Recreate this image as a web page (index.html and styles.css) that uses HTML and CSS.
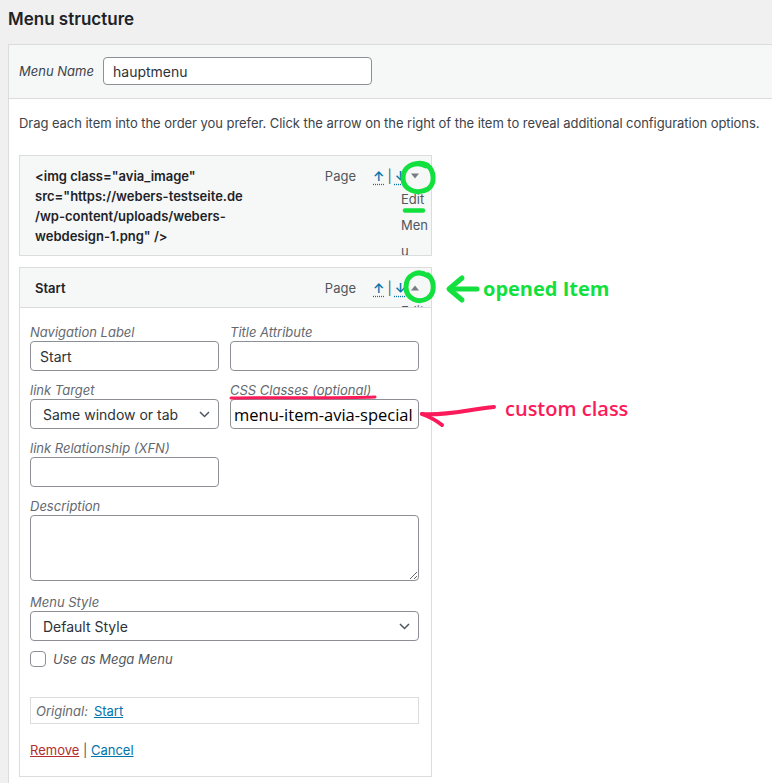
FILE: index.html
```html
<!DOCTYPE html>
<html lang="en">
<head>
<meta charset="utf-8">
<title>Menu structure</title>
<link rel="stylesheet" href="styles.css">
</head>
<body>
<div class="page">
  <h2 class="title">Menu structure</h2>
  <div class="menu-panel">
    <div class="menu-name-bar">
      <label class="lbl-name" for="menu-name">Menu Name</label>
      <input id="menu-name" class="name-input" type="text" value="hauptmenu">
    </div>
    <div class="menu-body">
      <p class="intro">Drag each item into the order you prefer. Click the arrow on the right of the item to reveal additional configuration options.</p>
      <ul class="items">
        <li class="item">
          <div class="handle">
            <div class="item-title">&lt;img class="avia_image"<br>src="https://webers-testseite.de<br>/wp-content/uploads/webers-<br>webdesign-1.png" /&gt;</div>
            <div class="controls">
              <span class="type">Page</span>
              <span class="moves"><a class="mv" href="#">↑</a><span class="bar">|</span><a class="mv" href="#">↓</a></span>
              <div class="toggle">
                <span class="tri"><svg width="8" height="6" viewBox="0 0 8 6"><path d="M0 0.5 L8 0.5 L4 5.5 Z" fill="#787c82"/></svg></span>
                <span class="edit-txt">Edit<br>Men<br>u</span>
              </div>
            </div>
          </div>
        </li>
        <li class="item">
          <div class="handle">
            <div class="item-title">Start</div>
            <div class="controls">
              <span class="type">Page</span>
              <span class="moves"><a class="mv" href="#">↑</a><span class="bar">|</span><a class="mv" href="#">↓</a></span>
              <div class="toggle">
                <span class="tri"><svg width="8" height="6" viewBox="0 0 8 6"><path d="M0 5.5 L8 5.5 L4 0.5 Z" fill="#787c82"/></svg></span>
                <span class="edit-txt">Edit<br>Men<br>u</span>
              </div>
            </div>
          </div>
          <div class="settings">
            <div class="grid">
              <div class="field">
                <label>Navigation Label</label>
                <input class="ctl" type="text" value="Start">
              </div>
              <div class="field">
                <label>Title Attribute</label>
                <input class="ctl" type="text" value="">
              </div>
              <div class="field">
                <label>link Target</label>
                <div class="ctl select"><span>Same window or tab</span><svg width="11" height="7" viewBox="0 0 11 7"><path d="M1 1 L5.5 5.5 L10 1" fill="none" stroke="#50575e" stroke-width="1.5"/></svg></div>
              </div>
              <div class="field">
                <label>CSS Classes (optional)</label>
                <input class="ctl css-input" type="text" value="menu-item-avia-special">
              </div>
              <div class="field">
                <label>link Relationship (XFN)</label>
                <input class="ctl" type="text" value="">
              </div>
            </div>
            <div class="field field-desc">
              <label>Description</label>
              <textarea class="ctl area"></textarea>
            </div>
            <div class="field">
              <label>Menu Style</label>
              <div class="ctl select"><span>Default Style</span><svg width="11" height="7" viewBox="0 0 11 7"><path d="M1 1 L5.5 5.5 L10 1" fill="none" stroke="#50575e" stroke-width="1.5"/></svg></div>
            </div>
            <div class="check-row">
              <span class="checkbox"></span>
              <span class="check-lbl">Use as Mega Menu</span>
            </div>
            <div class="original">
              <span class="orig-lbl">Original:</span>
              <a class="link" href="#">Start</a>
            </div>
            <div class="actions">
              <a class="remove" href="#">Remove</a> <span class="sep">|</span> <a class="link" href="#">Cancel</a>
            </div>
          </div>
        </li>
      </ul>
    </div>
  </div>
</div>

<svg class="annot" width="772" height="783" viewBox="0 0 772 783">
  <g fill="none" stroke="#12e03f" stroke-linecap="round" stroke-linejoin="round" stroke-width="5">
    <path d="M426 166 C414 160 403 167 403 178 C403 190 417 195 428 189 C435 184 435 171 427 165 C423 163 419 163 415 164"/>
    <path d="M428 276 C418 269 406 275 406 287 C406 299 419 304 428 298 C435 293 435 281 428 275"/>
    <path d="M405 210.5 L423 210.5" stroke-width="4.5"/>
    <path d="M450 289 L477 289"/>
    <path d="M462 278 L449 289 L462 300"/>
  </g>
  <g fill="none" stroke="#fb1a5a" stroke-linecap="round" stroke-linejoin="round">
    <path d="M231 398 C280 397 330 398.5 375 397" stroke-width="3"/>
    <path d="M494 407 C470 409 446 416 422 414" stroke-width="4"/>
    <path d="M422 414 C430 417 437 421 442 425" stroke-width="4"/>
  </g>
</svg>
<div class="note note-green">opened Item</div>
<div class="note note-pink">custom class</div>
</body>
</html>
```

FILE: styles.css
```css
* { box-sizing: border-box; }
html, body { margin: 0; padding: 0; }
body {
  width: 772px;
  height: 783px;
  overflow: hidden;
  position: relative;
  background: #f0f0f1;
  font-family: Inter, "Liberation Sans", sans-serif;
  font-size: 13px;
  color: #3c434a;
}
.page { padding: 8px 0 0 8px; }
.title {
  margin: 0 0 14px;
  font-size: 17px;
  line-height: 22px;
  font-weight: 600;
  color: #1d2327;
}
.menu-panel {
  width: 800px;
  min-height: 760px;
  border: 1px solid #dcdcde;
  background: #fff;
}
.menu-name-bar {
  display: flex;
  align-items: center;
  padding: 12px 10px 13px;
  background: #f6f7f7;
  border-bottom: 1px solid #dcdcde;
}
.lbl-name {
  width: 84px;
  font-style: italic;
  color: #3c434a;
}
.name-input {
  width: 269px;
  height: 28px;
  border: 1px solid #8c8f94;
  border-radius: 4px;
  padding: 0 9px;
  font-family: Inter, "Liberation Sans", sans-serif;
  font-size: 14px;
  color: #2c3338;
  background: #fff;
}
.menu-body { padding: 14px 10px 0; }
.intro { margin: 0 0 22px; line-height: 20px; color: #3c434a; letter-spacing: -0.05px; }
.items {
  list-style: none;
  margin: 0;
  padding: 0;
  width: 413px;
  display: flex;
  flex-direction: column;
  gap: 11px;
}
.handle {
  display: flex;
  align-items: flex-start;
  padding: 10px 0 9px 15px;
  background: #f6f7f7;
  border: 1px solid #dcdcde;
  overflow: hidden;
}
.item-title {
  flex: 1;
  font-weight: 600;
  line-height: 20px;
  color: #1d2327;
}
.controls {
  display: flex;
  align-items: flex-start;
  height: 20px;
  line-height: 20px;
}
.type { color: #50575e; margin-right: 17px; }
.moves {
  display: flex;
  gap: 3px;
  width: 26px;
  color: #50575e;
  white-space: nowrap;
}
.mv {
  color: #0073aa;
  font-weight: 600;
  text-decoration: underline dotted;
  text-underline-offset: 3px;
}
.toggle { width: 30px; margin-left: 2px; }
.tri {
  display: flex;
  align-items: center;
  height: 20px;
  padding-left: 10px;
}
.edit-txt {
  display: block;
  line-height: 26px;
  color: #50575e;
}
.settings {
  border: 1px solid #dcdcde;
  border-top: 0;
  background: #fff;
  padding: 15px 12px 17px 10px;
}
.grid {
  display: grid;
  grid-template-columns: 189px 189px;
  column-gap: 11px;
}
.field { margin-bottom: 10px; }
.field label {
  display: block;
  font-style: italic;
  line-height: 18px;
  color: #646970;
}
.ctl {
  display: block;
  width: 100%;
  height: 30px;
  border: 1px solid #8c8f94;
  border-radius: 4px;
  background: #fff;
  font-family: Inter, "Liberation Sans", sans-serif;
  font-size: 14px;
  color: #2c3338;
  padding: 0 9px;
  margin: 0;
}
.select {
  display: flex;
  align-items: center;
  justify-content: space-between;
  padding: 0 8px 0 12px;
}
.css-input {
  padding: 0 3px;
  font-family: "Open Sans", sans-serif;
  font-size: 16.5px;
  font-weight: 500;
  color: #000;
}
.field-desc { margin-bottom: 12px; }
.area { height: 66px; resize: both; padding: 6px 9px; }
.check-row {
  display: flex;
  align-items: center;
  gap: 7px;
  height: 16px;
}
.checkbox {
  width: 16px;
  height: 16px;
  border: 1px solid #8c8f94;
  border-radius: 4px;
  background: #fff;
}
.check-lbl { font-style: italic; color: #50575e; }
.original {
  margin-top: 30px;
  height: 27px;
  display: flex;
  align-items: center;
  gap: 6px;
  padding: 0 5px;
  border: 1px solid #dcdcde;
}
.orig-lbl { font-style: italic; color: #646970; }
.link { color: #0073aa; text-decoration: underline; }
.actions { margin-top: 17px; line-height: 18px; color: #50575e; }
.remove { color: #b32d2e; text-decoration: underline; }
.annot {
  position: absolute;
  left: 0;
  top: 0;
  pointer-events: none;
}
.note {
  position: absolute;
  font-family: "Open Sans", sans-serif;
  font-size: 20px;
  line-height: 28px;
  white-space: nowrap;
}
.note-green { left: 483px; top: 275px; color: #12e03f; font-weight: 700; }
.note-pink { left: 505px; top: 395px; color: #fb1a5a; font-weight: 600; }
```
